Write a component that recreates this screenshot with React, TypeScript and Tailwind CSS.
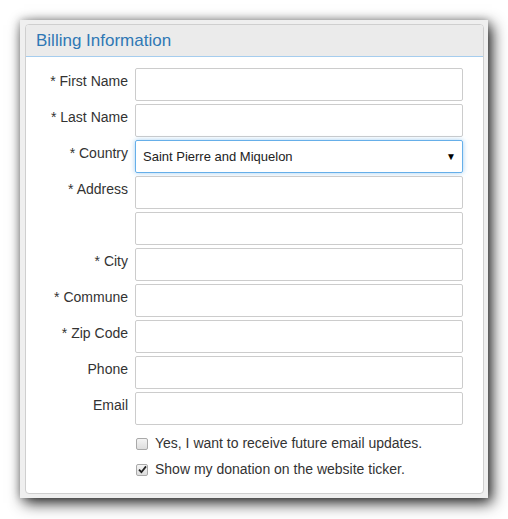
import React from "react";

const fields = [
  { label: "* First Name" },
  { label: "* Last Name" },
  { label: "* Country", select: "Saint Pierre and Miquelon" },
  { label: "* Address" },
  { label: "" },
  { label: "* City" },
  { label: "* Commune" },
  { label: "* Zip Code" },
  { label: "Phone" },
  { label: "Email" },
];

function Box({ checked }: { checked?: boolean }) {
  return (
    <span className="flex h-[12px] w-[12px] items-center justify-center rounded-[2px] border border-[#a9a9a9] bg-gradient-to-b from-[#f4f4f4] to-[#dedede]">
      {checked && (
        <svg width="9" height="9" viewBox="0 0 9 9">
          <path d="M1 4.6 L3.4 7.2 L8 1.4" fill="none" stroke="#222" strokeWidth="1.8" />
        </svg>
      )}
    </span>
  );
}

export default function App() {
  return (
    <div className="min-h-screen bg-white p-[20px] font-['Liberation_Sans',Arial,sans-serif]">
      <div className="w-[468px] h-[478px] bg-[#efefef] pt-[4px] pl-[5px] shadow-[4px_5px_14px_rgba(0,0,0,0.85),0_0_8px_rgba(0,0,0,0.25)]">
        <div className="w-[459px] h-[470px] rounded-[4px] border border-[#cfcfcf] bg-white overflow-hidden">
          <div className="h-[32px] border-b border-[#a6cdee] bg-[#ebebeb] pl-[10px] pt-[3px] text-[17px] text-[#2f78b5]">
            Billing Information
          </div>
          <div className="pt-[11px] pr-[20px] flex flex-col gap-[3px]">
            {fields.map((f, i) => (
              <div key={i} className="flex">
                <div className="w-[102px] pt-[3px] text-right text-[14px] text-[#333]">{f.label}</div>
                <div className="ml-[7px] flex-1">
                  {f.select ? (
                    <div className="flex h-[33px] items-center justify-between rounded-[2px] border border-[#66afe9] pl-[7px] pr-[6px] text-[13px] text-[#222] shadow-[0_0_5px_rgba(102,175,233,0.6)]">
                      <span>{f.select}</span>
                      <span className="text-[10px] text-black">▼</span>
                    </div>
                  ) : (
                    <div className="h-[33px] rounded-[2px] border border-[#cccccc] bg-white" />
                  )}
                </div>
              </div>
            ))}
          </div>
          <div className="mt-[8px] ml-[110px] flex flex-col gap-[5px] text-[14px] text-[#333]">
            <label className="flex items-center gap-[7px]">
              <Box />
              <span>Yes, I want to receive future email updates.</span>
            </label>
            <label className="flex items-center gap-[7px]">
              <Box checked />
              <span>Show my donation on the website ticker.</span>
            </label>
          </div>
        </div>
      </div>
    </div>
  );
}
